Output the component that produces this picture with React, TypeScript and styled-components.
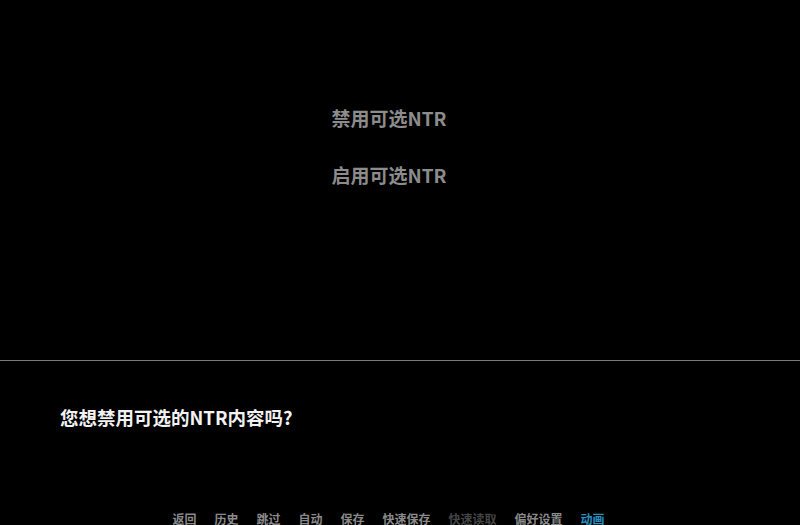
import React from 'react';
import styled, { createGlobalStyle } from 'styled-components';

type QuickState = 'normal' | 'disabled' | 'selected';

interface QuickItem {
  label: string;
  state: QuickState;
}

const choices = ['禁用可选NTR', '启用可选NTR'];

const quickItems: QuickItem[] = [
  { label: '返回', state: 'normal' },
  { label: '历史', state: 'normal' },
  { label: '跳过', state: 'normal' },
  { label: '自动', state: 'normal' },
  { label: '保存', state: 'normal' },
  { label: '快速保存', state: 'normal' },
  { label: '快速读取', state: 'disabled' },
  { label: '偏好设置', state: 'normal' },
  { label: '动画', state: 'selected' },
];

const App: React.FC = () => {
  return (
    <>
      <GlobalStyle />
      <Screen>
        <Stage>
          <ChoiceList>
            {choices.map((text) => (
              <ChoiceButton key={text} type='button'>
                {text}
              </ChoiceButton>
            ))}
          </ChoiceList>
        </Stage>
        <DialogBox>
          <DialogText>您想禁用可选的NTR内容吗?</DialogText>
          <QuickMenu>
            {quickItems.map((item) => (
              <QuickButton key={item.label} type='button' $state={item.state}>
                {item.label}
              </QuickButton>
            ))}
          </QuickMenu>
        </DialogBox>
      </Screen>
    </>
  );
};

const GlobalStyle = createGlobalStyle`
  html, body {
    margin: 0;
    padding: 0;
    background: #000;
  }

  body {
    font-family: "Noto Sans CJK SC", "Noto Sans", sans-serif;
  }
`;

const Screen = styled.div`
  width: 800px;
  height: 525px;
  background-color: #000;
  overflow: hidden;
  display: flex;
  flex-direction: column;
`;

const Stage = styled.div`
  height: 360px;
  flex-shrink: 0;
  padding-right: 22px;
  box-sizing: border-box;
`;

const ChoiceList = styled.div`
  display: flex;
  flex-direction: column;
  align-items: center;
  gap: 38px;
  padding-top: 108px;
`;

const ChoiceButton = styled.button`
  border: none;
  background: none;
  padding: 0;
  font-family: inherit;
  font-size: 19px;
  font-weight: 700;
  line-height: 19px;
  color: #8c8c8c;
  cursor: pointer;
`;

const DialogBox = styled.div`
  flex: 1;
  display: flex;
  flex-direction: column;
  border-top: 1px solid #7a7a7a;
  padding: 47px 0 0 60px;
`;

const DialogText = styled.p`
  margin: 0;
  font-size: 18.5px;
  font-weight: 700;
  line-height: 19px;
  color: #f2f2f2;
`;

const QuickMenu = styled.nav`
  margin-top: auto;
  margin-left: -60px;
  padding-right: 23px;
  display: flex;
  justify-content: center;
  gap: 18px;
  height: 13px;
`;

const QuickButton = styled.button<{ $state: QuickState }>`
  border: none;
  background: none;
  padding: 0;
  font-family: inherit;
  font-size: 12px;
  font-weight: 700;
  line-height: 12px;
  color: ${({ $state }) =>
    $state === 'selected' ? '#2a90c0' : $state === 'disabled' ? '#444444' : '#8a8a8a'};
  cursor: pointer;
`;

export default App;
